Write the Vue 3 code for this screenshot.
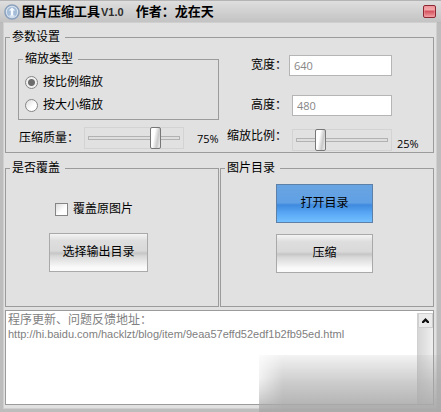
<script setup>
import { ref } from 'vue'

const mode = ref('ratio')
const width = ref('640')
const height = ref('480')
const quality = ref(75)
const scale = ref(25)
const overwrite = ref(false)
</script>

<template>
  <main class="window">
    <header class="titlebar">
      <svg class="logo" viewBox="0 0 16 16" aria-hidden="true">
        <circle cx="8" cy="8" r="7" fill="#dbe5f0" stroke="#8ba1bd" stroke-width="1.6" />
        <circle cx="8" cy="8" r="5.2" fill="#a4bcd8" />
        <path d="M4.8 6.4 8 3.4l3.2 3H9.2v5.2H6.8V6.4z" fill="#f6faff" />
        <path d="M5.6 12h4.8" stroke="#f6faff" stroke-width="1.2" />
      </svg>
      <h1>图片压缩工具<span class="version">V1.0</span><span class="author">作者：龙在天</span></h1>
      <button class="close" type="button" aria-label="关闭"></button>
    </header>

    <div class="frame">
      <fieldset class="group">
        <legend>参数设置</legend>
        <div class="columns">
          <div>
            <fieldset class="group">
              <legend>缩放类型</legend>
              <div class="types">
                <label class="option"><input v-model="mode" type="radio" name="mode" value="ratio" />按比例缩放</label>
                <label class="option"><input v-model="mode" type="radio" name="mode" value="size" />按大小缩放</label>
              </div>
            </fieldset>
            <div class="row quality">
              <label for="quality">压缩质量：</label>
              <input id="quality" v-model="quality" class="slider" type="range" min="0" max="100" />
              <output for="quality">{{ quality }}%</output>
            </div>
          </div>
          <div class="fields">
            <div class="row wide">
              <label for="width">宽度：</label>
              <input id="width" v-model="width" class="text" type="text" />
            </div>
            <div class="row">
              <label for="height">高度：</label>
              <input id="height" v-model="height" class="text" type="text" />
            </div>
            <div class="row scale">
              <label for="scale">缩放比例：</label>
              <input id="scale" v-model="scale" class="slider" type="range" min="0" max="100" />
              <output for="scale">{{ scale }}%</output>
            </div>
          </div>
        </div>
      </fieldset>

      <div class="panels">
        <fieldset class="group">
          <legend>是否覆盖</legend>
          <div class="panel output">
            <label class="option"><input v-model="overwrite" type="checkbox" />覆盖原图片</label>
            <button class="btn" type="button">选择输出目录</button>
          </div>
        </fieldset>
        <fieldset class="group">
          <legend>图片目录</legend>
          <div class="panel source">
            <button class="btn primary" type="button">打开目录</button>
            <button class="btn" type="button">压缩</button>
          </div>
        </fieldset>
      </div>

      <section class="notes">
        <div class="notes-text">
          <p>程序更新、问题反馈地址：</p>
          <a href="http://hi.baidu.com/hacklzt/blog/item/9eaa57effd52edf1b2fb95ed.html">http://hi.baidu.com/hacklzt/blog/item/9eaa57effd52edf1b2fb95ed.html</a>
        </div>
        <div class="scrollbar">
          <button type="button" aria-label="向上滚动">
            <svg viewBox="0 0 7 5" aria-hidden="true"><path d="M3.5 0 7 3.5V5H5.2L3.5 3.3 1.8 5H0V3.5z" fill="#111" /></svg>
          </button>
        </div>
      </section>
    </div>
    <div class="haze"></div>
  </main>
</template>

<style>
body {
  background: #bdbdbd;
}
</style>

<style scoped>
* {
  box-sizing: border-box;
}
.window {
  position: relative;
  display: flex;
  flex-direction: column;
  min-height: 100vh;
  overflow: hidden;
  background: #bdbdbd;
  color: #000;
  font: 12px/15px "Liberation Sans", "Noto Sans CJK SC", sans-serif;
}
.titlebar {
  display: flex;
  align-items: center;
  height: 23px;
  padding: 0 5px 0 4px;
  border-top: 1px solid #b4b4b4;
  border-bottom: 1px solid #b8b8b8;
  background: linear-gradient(#dedede, #d2d2d2 45%, #c3c3c3);
}
.logo {
  width: 16px;
  height: 16px;
}
h1 {
  flex: 1;
  margin: 0 0 0 2px;
  font-size: 13px;
  line-height: 20px;
  font-weight: bold;
  white-space: nowrap;
}
.version {
  margin-left: 1px;
  color: #2c2c2c;
  font-size: 11px;
}
.author {
  margin-left: 12px;
}
.close {
  width: 13px;
  height: 13px;
  padding: 0;
  border: 1px solid #8c2834;
  border-radius: 2px;
  background: linear-gradient(#ee9499, #f2a9ac 36%, #d4525e 46%, #e0727a 70%, #f4a4a6);
  box-shadow: inset 0 0 0 1px rgba(240, 150, 156, 0.6);
}
.frame {
  flex: 1;
  display: flex;
  flex-direction: column;
  margin: 0 5px 4px 4px;
  padding: 7px 2px 3px 1px;
  background: #e1e1e1;
  box-shadow: 0 0 0 1px #cfcfcf;
}
.group {
  min-width: 0;
  margin: 0;
  padding: 0;
  border: 1px solid #9b9b9b;
}
legend {
  margin-left: 4px;
  padding: 0 5px 0 2px;
  line-height: 15px;
}
.columns {
  display: grid;
  grid-template-columns: 1fr 1fr;
  gap: 8px;
  padding: 7px 5px 1px 12px;
}
.types {
  padding: 4px 6px 2px;
}
.option {
  display: flex;
  align-items: center;
  gap: 5px;
  height: 23px;
}
.option input {
  appearance: none;
  width: 13px;
  height: 13px;
  margin: 0;
  border: 1px solid #858585;
  background: linear-gradient(135deg, #dcdcdc, #fff 60%);
}
.option input[type="radio"] {
  border-radius: 50%;
}
.option input[type="radio"]:checked {
  background: radial-gradient(circle, #6c6c6c 0 3px, #f0f0f0 4px);
}
.option input[type="checkbox"]:checked {
  background: #606060;
}
.row {
  display: flex;
  align-items: center;
  gap: 5px;
}
.row label {
  flex: none;
  width: 60px;
  text-align: right;
  white-space: nowrap;
}
.quality {
  margin-top: 7px;
  padding-left: 1px;
}
.quality output {
  margin-left: 8px;
}
.fields {
  padding-top: 3px;
}
.row + .row {
  margin-top: 19px;
}
.row + .scale {
  margin-top: 13px;
}
.scale output {
  align-self: flex-end;
}
.scale label {
  align-self: flex-start;
}
.text {
  width: 100px;
  height: 21px;
  padding: 0 4px;
  border: 1px solid #b5b5b5;
  border-radius: 0;
  background: #fff;
  color: #868686;
  font: 11px "Open Sans", sans-serif;
}
.wide {
  gap: 2px;
}
.wide .text {
  width: 103px;
}
output {
  font: 11px/15px "Open Sans", sans-serif;
}
.slider {
  appearance: none;
  width: 100px;
  height: 22px;
  margin: 0;
  padding: 0;
  border: 1px solid #d3d3d3;
  background: transparent;
}
.slider::-webkit-slider-runnable-track {
  height: 20px;
  background:
    linear-gradient(#dedede, #dedede) center / 90px 2px no-repeat,
    linear-gradient(#b2b2b2, #b2b2b2) center / 92px 4px no-repeat;
}
.slider::-webkit-slider-thumb {
  appearance: none;
  width: 11px;
  height: 22px;
  margin-top: -1px;
  border: 1px solid #777;
  border-radius: 2px;
  background: linear-gradient(100deg, #fff 35%, #c9c9c9 70%, #f2f2f2);
}
.panels {
  display: grid;
  grid-template-columns: 1fr 1fr;
  gap: 1px;
  margin: 8px 0 3px;
}
.panel {
  display: flex;
  flex-direction: column;
}
.output {
  padding: 22px 43px 34px;
}
.output .option {
  padding-left: 6px;
  margin-bottom: 12px;
}
.output .btn {
  width: 99px;
}
.source {
  padding: 8px 60px 33px 55px;
}
.source .btn + .btn {
  margin-top: 11px;
}
.btn {
  height: 39px;
  padding: 0;
  border: 1px solid #a9a9a9;
  border-radius: 0;
  background: linear-gradient(#f4f4f4, #dedede 18%, #d9d9d9 45%, #c6c6c6 52%, #d8d8d8 60%, #fafafa 90%);
  color: #000;
  font: inherit;
  white-space: nowrap;
}
.primary {
  border-color: #5c80a8;
  background: linear-gradient(#68a4e2, #60a0e4 48%, #3f8ade 54%, #58a6f4 75%, #72c0ff);
}
.notes {
  flex: 1;
  display: flex;
  min-height: 95px;
  border: 1px solid #9b9b9b;
  background: #fff;
}
.notes-text {
  flex: 1;
  min-width: 0;
  padding: 2px;
  color: #808080;
}
.notes p {
  margin: 0;
}
.notes a {
  display: block;
  color: inherit;
  font-size: 11px;
  line-height: 13px;
  text-decoration: none;
}
.scrollbar {
  width: 16px;
  margin-top: 2px;
  border-left: 1px solid #d0d0d0;
  background: linear-gradient(90deg, #d6d6d6, #efefef);
}
.scrollbar button {
  display: flex;
  align-items: center;
  justify-content: center;
  width: 15px;
  height: 15px;
  padding: 0;
  border: 1px solid #cfcfcf;
  background: #ebebeb;
}
.scrollbar svg {
  width: 7px;
  height: 5px;
}
.haze {
  position: absolute;
  right: 0;
  bottom: 0;
  width: 182px;
  height: 57px;
  background: linear-gradient(rgba(168, 168, 168, 0.14), rgba(168, 168, 168, 0.6) 50%, rgba(170, 170, 170, 0.97));
  mask-image:
    linear-gradient(90deg, rgba(0, 0, 0, 0.3), #000 24px),
    linear-gradient(transparent 40%, rgba(0, 0, 0, 0.9));
  pointer-events: none;
}
</style>
